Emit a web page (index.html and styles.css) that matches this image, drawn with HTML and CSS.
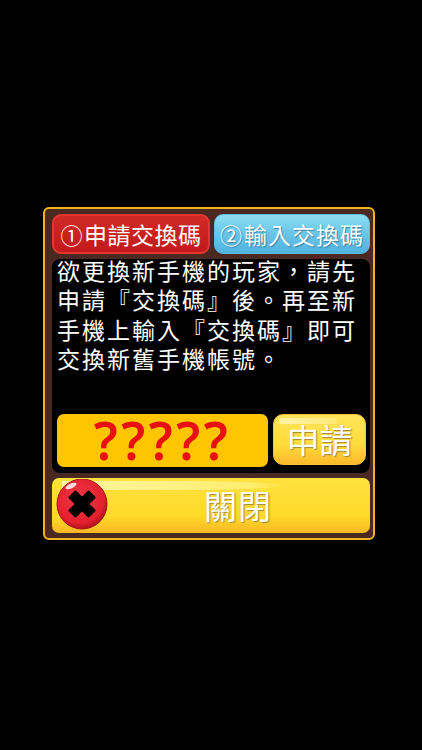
FILE: index.html
```html
<!DOCTYPE html>
<html lang="zh-Hant">
<head>
    <meta charset="UTF-8">
    <meta name="viewport" content="width=device-width, initial-scale=1.0">
    <title>交換碼</title>
    <link rel="stylesheet" href="styles.css">
</head>
<body>
    <div class="panel">
        <div class="tabs">
            <button class="tab tab-red"><span class="num">①</span>申請交換碼</button>
            <button class="tab tab-blue"><span class="num">②</span>輸入交換碼</button>
        </div>

        <div class="content">
            <p class="message">欲更換新手機的玩家&#xFF0C;請先<br>申請『交換碼』後。再至新<br>手機上輸入『交換碼』即可<br>交換新舊手機帳號。</p>
            <div class="code-row">
                <div class="code">?????</div>
                <button class="btn-apply"><span class="shine"></span>申請</button>
            </div>
        </div>

        <button class="btn-close">
            <span class="shine"></span>
            <span class="close-icon">
                <svg viewBox="0 0 52 52" width="52" height="52">
                    <defs>
                        <radialGradient id="redBall" cx="45%" cy="40%" r="60%">
                            <stop offset="0%" stop-color="#f23a48"/>
                            <stop offset="80%" stop-color="#e3202e"/>
                            <stop offset="100%" stop-color="#b3121c"/>
                        </radialGradient>
                    </defs>
                    <ellipse cx="26" cy="27" rx="25" ry="23" fill="#a8740f" opacity="0.6"/>
                    <circle cx="26" cy="25" r="25" fill="url(#redBall)" stroke="#a51520" stroke-width="1"/>
                    <ellipse cx="15" cy="7" rx="6" ry="2.4" fill="#ffd9dc" transform="rotate(-25 15 7)"/>
                    <path d="M26 19 L32.5 12.5 L38.5 18.5 L32 25 L38.5 31.5 L32.5 37.5 L26 31 L19.5 37.5 L13.5 31.5 L20 25 L13.5 18.5 L19.5 12.5 Z" fill="#000" stroke="#000" stroke-width="2" stroke-linejoin="round"/>
                </svg>
            </span>
            <span class="close-label">關閉</span>
        </button>
    </div>
</body>
</html>
```

FILE: styles.css
```css
* {
    box-sizing: border-box;
}

body {
    margin: 0;
    padding: 207px 47px 0 43px;
    min-height: 100vh;
    background-color: #000;
    font-family: "Noto Sans CJK TC", "Liberation Sans", sans-serif;
    overflow: hidden;
}

button {
    font-family: inherit;
    padding: 0;
    cursor: pointer;
}

.panel {
    width: 332px;
    height: 333px;
    padding: 5px 3px 6px 7px;
    border: 2px solid #efb422;
    border-radius: 6px;
    background-color: #4a2a20;
}

.tabs {
    display: flex;
    gap: 4px;
    height: 40px;
}

.tab {
    flex: 1;
    display: flex;
    align-items: center;
    justify-content: center;
    border-radius: 9px;
    color: #fff;
    font-size: 23px;
    line-height: 1;
    white-space: nowrap;
}

.tab-red {
    background: linear-gradient(#d02a26, #c21a1c);
    border: 2px solid #e5352f;
    letter-spacing: 0.5px;
}

.tab-blue {
    background: linear-gradient(#8cdcf2 0%, #6cc8e8 45%, #4fb2e0 100%);
    border: 1px solid #5db8e2;
    letter-spacing: 1px;
    text-shadow: 1px 1px 1px #3d7d9c;
}

.num {
    margin-right: 1px;
    font-size: 22px;
}

.content {
    display: flex;
    flex-direction: column;
    justify-content: space-between;
    height: 214px;
    margin-top: 5px;
    padding: 0 4px 6px 5px;
    border-radius: 8px;
    background-color: #000;
}

.message {
    margin: -3px 0 0;
    color: #fff;
    font-size: 23px;
    letter-spacing: 2px;
    line-height: 29.4px;
    white-space: nowrap;
}

.code-row {
    display: flex;
    gap: 5px;
    align-items: flex-start;
}

.code {
    width: 211px;
    height: 53px;
    border-radius: 7px;
    background-color: #ffc600;
    color: #e8110f;
    font-family: "Noto Sans", sans-serif;
    font-size: 52px;
    font-weight: 600;
    letter-spacing: 3.5px;
    line-height: 52px;
    text-align: center;
}

.btn-apply {
    position: relative;
    width: 93px;
    height: 51px;
    border: 1px solid #f7c33a;
    border-radius: 10px;
    background: linear-gradient(#ffe458 0%, #ffdc3c 60%, #fbb92a 100%);
    color: #fff;
    font-size: 33px;
    line-height: 1;
    text-shadow: 1px 1px 1px #a08a3a;
}

.btn-apply .shine {
    position: absolute;
    top: 3px;
    left: 5px;
    width: 58px;
    height: 6px;
    border-radius: 6px;
    background: linear-gradient(90deg, #fff3a8, #ffe978);
}

.btn-close {
    position: relative;
    display: block;
    width: 318px;
    height: 55px;
    margin-top: 5px;
    padding-left: 54px;
    border: none;
    border-radius: 7px;
    background: linear-gradient(#ffe23e 0%, #ffd92a 70%, #fbb722 100%);
    color: #fff;
    font-size: 33px;
    line-height: 55px;
    text-shadow: 1px 1px 1px #a08a3a;
}

.btn-close .shine {
    position: absolute;
    top: 3px;
    left: 10px;
    width: 222px;
    height: 9px;
    border-radius: 0 50% 50% 0;
    background: linear-gradient(90deg, #fff6a0, #ffee70 85%, #ffe23e);
}

.close-icon {
    position: absolute;
    top: 1px;
    left: 4px;
    width: 52px;
    height: 52px;
    line-height: 0;
}

.close-label {
    position: relative;
    letter-spacing: 1px;
}
```
